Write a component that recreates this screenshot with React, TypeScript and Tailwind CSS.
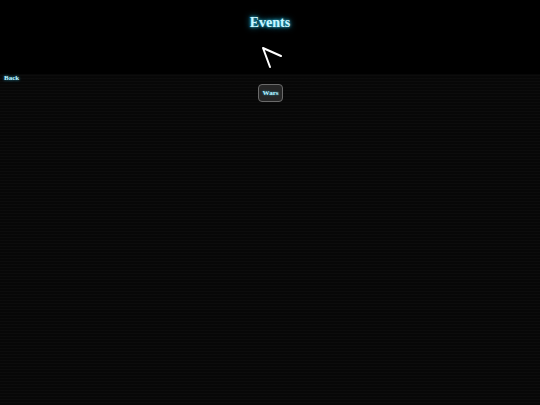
import * as React from "react"

export default function App() {
  return (
    <div className="min-h-[405px] w-full bg-[#070707] bg-[repeating-linear-gradient(to_bottom,rgba(255,255,255,0.018)_0px,rgba(255,255,255,0.018)_1px,transparent_1px,transparent_3px)] font-['Liberation_Serif',serif]">
      {/* header */}
      <div className="flex h-[74px] flex-col items-center bg-black pt-[14px]">
        <h1 className="text-[14px] font-bold leading-[18px] text-[#c8f6ff] [text-shadow:0_0_3px_#3ad7ff,0_0_6px_#1aa8d0]">
          Events
        </h1>
        <svg className="ml-[6px] mt-[14px]" width="24" height="26" viewBox="0 0 24 26" fill="none">
          <path d="M20 10 L2 2 L9 21" stroke="white" strokeWidth="2" strokeLinecap="round" strokeLinejoin="round" />
        </svg>
      </div>

      <div className="flex flex-col">
        <a className="pl-[4px] text-[7px] font-bold leading-[9px] text-[#bdf2ff] [text-shadow:0_0_3px_#2fb8e0]">
          Back
        </a>
        <div className="flex justify-center pt-[1px]">
          <button className="ml-[1px] h-[18px] w-[25px] rounded-[4px] border border-[#6a6a6a] bg-[#262626] text-[7px] font-bold leading-none text-[#bdf2ff] [text-shadow:0_0_2px_#2fb8e0]">
            Wars
          </button>
        </div>
      </div>
    </div>
  )
}
